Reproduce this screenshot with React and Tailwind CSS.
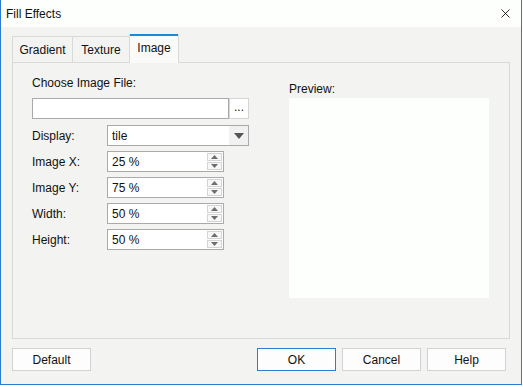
import { X } from 'lucide-react';

function SpinInput({ value }) {
  return (
    <div className="relative flex h-[21px] w-[117px] items-center border border-[#aaaaaa] bg-white pl-[4px]">
      <span>{value}</span>
      <div className="absolute right-[1px] top-[1px] flex flex-col gap-[1px]">
        <div className="flex h-[8px] w-[15px] items-center justify-center border border-[#d4d4d4] bg-[#f7f7f7]">
          <svg width="7" height="4" viewBox="0 0 7 4"><path d="M3.5 0 L7 4 L0 4 Z" fill="#6d6d6d" /></svg>
        </div>
        <div className="flex h-[8px] w-[15px] items-center justify-center border border-[#d4d4d4] bg-[#f7f7f7]">
          <svg width="7" height="4" viewBox="0 0 7 4"><path d="M0 0 L7 0 L3.5 4 Z" fill="#6d6d6d" /></svg>
        </div>
      </div>
    </div>
  );
}

function Row({ label, children }) {
  return (
    <div className="flex h-[21px] items-center">
      <span className="w-[75px]">{label}</span>
      {children}
    </div>
  );
}

function Btn({ label, primary }) {
  return (
    <div
      className={`flex h-[23px] w-[79px] items-center justify-center border bg-[#fdfdfd] ${
        primary ? 'border-[#2b7fd2]' : 'border-[#d2d2d2]'
      }`}
    >
      {label}
    </div>
  );
}

export default function App() {
  const tabs = [
    { name: 'Gradient', w: 'w-[60px]' },
    { name: 'Texture', w: 'w-[57px]' },
  ];

  return (
    <div className="h-[387px] w-[523px] bg-white text-[12px] text-[#111] font-['Liberation_Sans',Arial,sans-serif]">
      <div className="flex h-[385px] w-[522px] flex-col border-x border-b border-[#2b7bd4] bg-[#f3f3f1]">
        {/* title bar */}
        <div className="flex h-[27px] items-center justify-between bg-[#fdfffd] pl-[5px] pr-[8px]">
          <span>Fill Effects</span>
          <X size={15} strokeWidth={1.3} className="text-black" />
        </div>

        <div className="flex flex-1 flex-col px-[11px] pt-[6px]">
          {/* tabs */}
          <div className="flex h-[29px] items-end">
            {tabs.map((t) => (
              <div
                key={t.name}
                className={`flex h-[26px] ${t.w} items-center justify-center border-l border-t border-[#d9d9d9] bg-[#f3f3f1]`}
              >
                {t.name}
              </div>
            ))}
            <div className="relative z-10 -mb-px flex h-[29px] w-[50px] flex-col border-x border-[#d9d9d9] bg-[#fafbf9]">
              <div className="h-[2px] bg-[#1a8ad6]" />
              <div className="flex flex-1 items-center justify-center pb-[3px]">Image</div>
            </div>
          </div>

          {/* panel */}
          <div className="flex h-[277px] border border-[#d9d9d9] bg-[#f3f3f1] pl-[19px] pr-[16px]">
            <div className="flex w-[217px] flex-col pt-[12px]">
              <span className="leading-[16px]">Choose Image File:</span>
              <div className="mt-[7px] flex h-[21px]">
                <div className="h-full w-[197px] border border-[#aaaaaa] bg-white" />
                <div className="flex h-full w-[20px] items-center justify-center border border-[#d4d4d4] bg-white pb-[4px]">
                  ...
                </div>
              </div>
              <div className="mt-[6px] flex flex-col gap-[5px]">
                <Row label="Display:">
                  <div className="flex h-[21px] w-[142px] items-center border border-[#aaaaaa] bg-white">
                    <span className="flex-1 pl-[4px]">tile</span>
                    <div className="flex h-full w-[19px] items-center justify-center bg-[#f1f1f1]">
                      <svg width="10" height="6" viewBox="0 0 10 6"><path d="M0 0 L10 0 L5 6 Z" fill="#555" /></svg>
                    </div>
                  </div>
                </Row>
                <Row label="Image X:"><SpinInput value="25 %" /></Row>
                <Row label="Image Y:"><SpinInput value="75 %" /></Row>
                <Row label="Width:"><SpinInput value="50 %" /></Row>
                <Row label="Height:"><SpinInput value="50 %" /></Row>
              </div>
            </div>
            <div className="ml-[40px] flex flex-col pt-[18px]">
              <span className="leading-[16px]">Preview:</span>
              <div className="mt-[1px] h-[200px] w-[200px] bg-[#fdfffd]" />
            </div>
          </div>

          {/* buttons */}
          <div className="mt-[9px] flex items-center">
            <Btn label="Default" />
            <div className="flex-1" />
            <div className="flex gap-[6px] pr-[4px]">
              <Btn label="OK" primary />
              <Btn label="Cancel" />
              <Btn label="Help" />
            </div>
          </div>
        </div>
      </div>
    </div>
  );
}
